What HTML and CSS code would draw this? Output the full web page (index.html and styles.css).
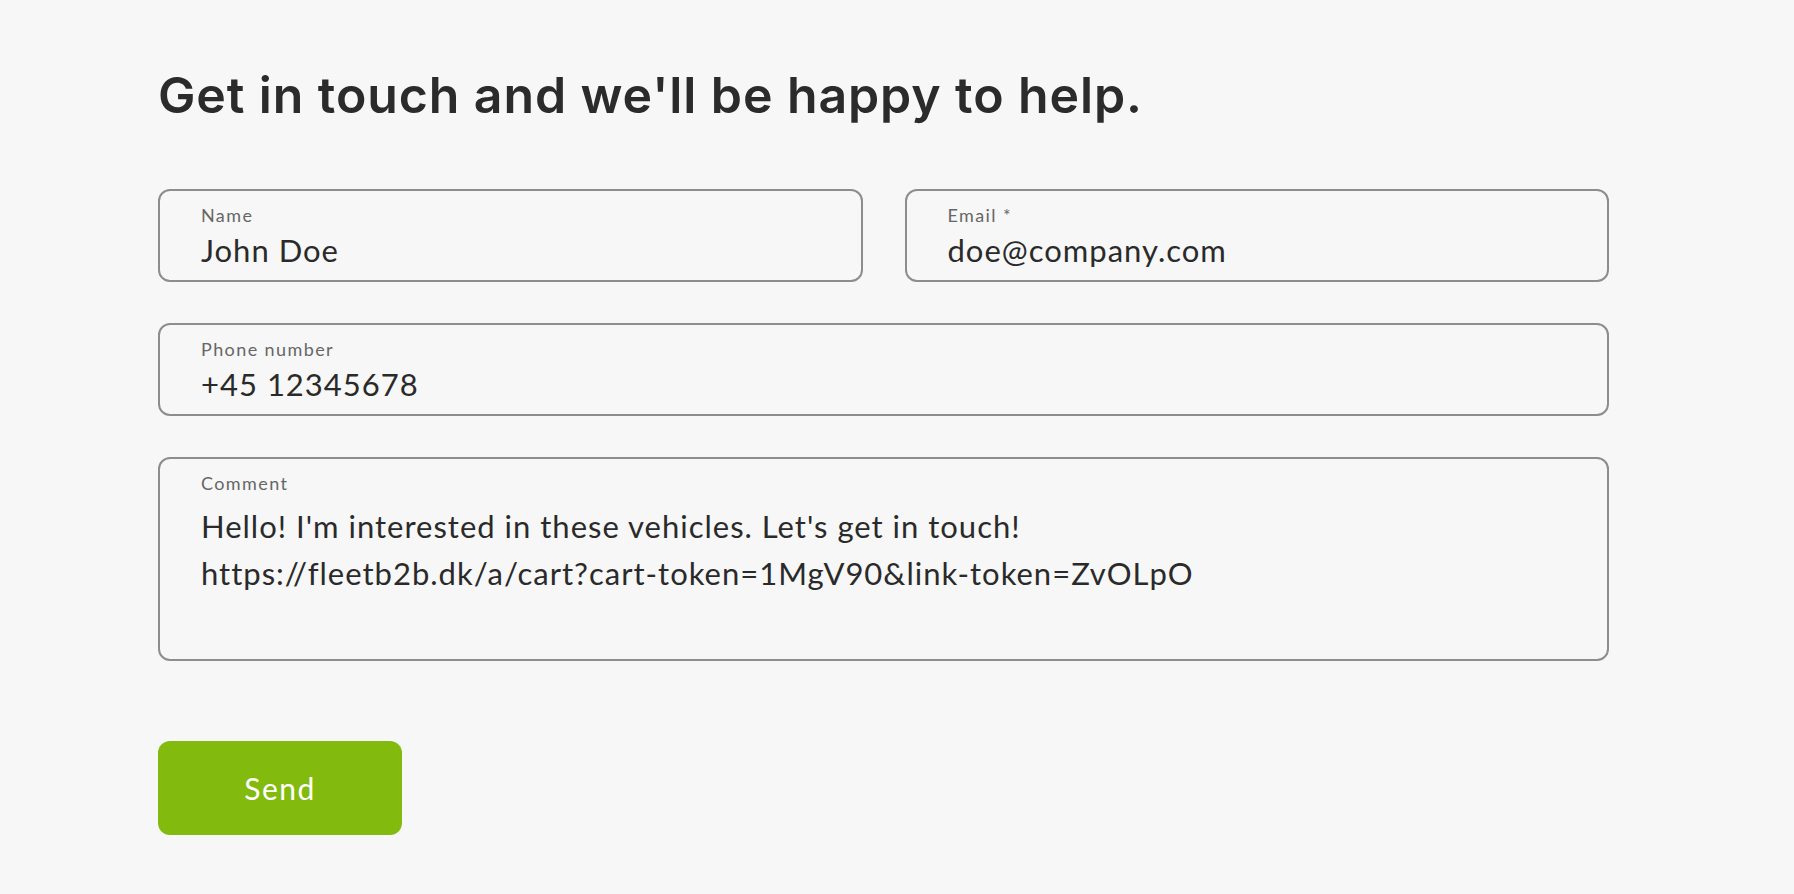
FILE: index.html
```html
<!DOCTYPE html>
<html lang="en">
<head>
    <meta charset="UTF-8">
    <meta name="viewport" content="width=device-width, initial-scale=1.0">
    <title>Contact</title>
    <link rel="stylesheet" href="styles.css">
</head>
<body>
    <main class="contact">
        <h1>Get in touch and we'll be happy to help.</h1>
        <form class="contact-form">
            <div class="row">
                <label class="field">
                    <span class="field-label">Name</span>
                    <input class="field-input" type="text" value="John Doe">
                </label>
                <label class="field">
                    <span class="field-label">Email *</span>
                    <input class="field-input" type="email" value="doe@company.com">
                </label>
            </div>
            <label class="field">
                <span class="field-label">Phone number</span>
                <input class="field-input" type="tel" value="+45 12345678">
            </label>
            <label class="field field-area">
                <span class="field-label">Comment</span>
                <textarea class="field-input" rows="3">Hello! I'm interested in these vehicles. Let's get in touch!
https://fleetb2b.dk/a/cart?cart-token=1MgV90&amp;link-token=ZvOLpO</textarea>
            </label>
            <button type="button" class="send">Send</button>
        </form>
    </main>
</body>
</html>
```

FILE: styles.css
```css
body {
    font-family: "Lato", "Noto Sans", sans-serif;
    background-color: #f7f7f7;
    color: #2a2a2a;
    margin: 0;
    padding: 0;
}
.contact {
    width: 1451px;
    padding: 65px 0 0 158px;
}
h1 {
    font-family: "Inter", "Noto Sans", sans-serif;
    font-weight: 600;
    font-size: 50px;
    line-height: 60px;
    letter-spacing: 0.9px;
    color: #2b2b2b;
    margin: 0 0 64px;
}
.contact-form {
    display: flex;
    flex-direction: column;
    gap: 41px;
}
.row {
    display: grid;
    grid-template-columns: 1fr 1fr;
    gap: 42px;
}
.field {
    display: flex;
    flex-direction: column;
    box-sizing: border-box;
    height: 93px;
    padding: 14px 41px 0;
    border: 2px solid #8d8d8d;
    border-radius: 12px;
}
.field-label {
    font-size: 18px;
    line-height: 20px;
    letter-spacing: 1.4px;
    color: #666;
}
.field-input {
    font-family: inherit;
    font-size: 31px;
    line-height: 40px;
    letter-spacing: 1px;
    height: 40px;
    margin-top: 5px;
    padding: 0;
    border: none;
    background: transparent;
    color: #2a2a2a;
    outline: none;
}
.field-area {
    height: 204px;
}
.field-area textarea {
    height: 140px;
    line-height: 47px;
    margin-top: 10px;
    resize: none;
    overflow: hidden;
}
.send {
    align-self: flex-start;
    width: 244px;
    height: 94px;
    margin-top: 39px;
    font-family: inherit;
    font-size: 30px;
    letter-spacing: 1.5px;
    color: white;
    background-color: #82bb0e;
    border: none;
    border-radius: 12px;
    cursor: pointer;
}
```
